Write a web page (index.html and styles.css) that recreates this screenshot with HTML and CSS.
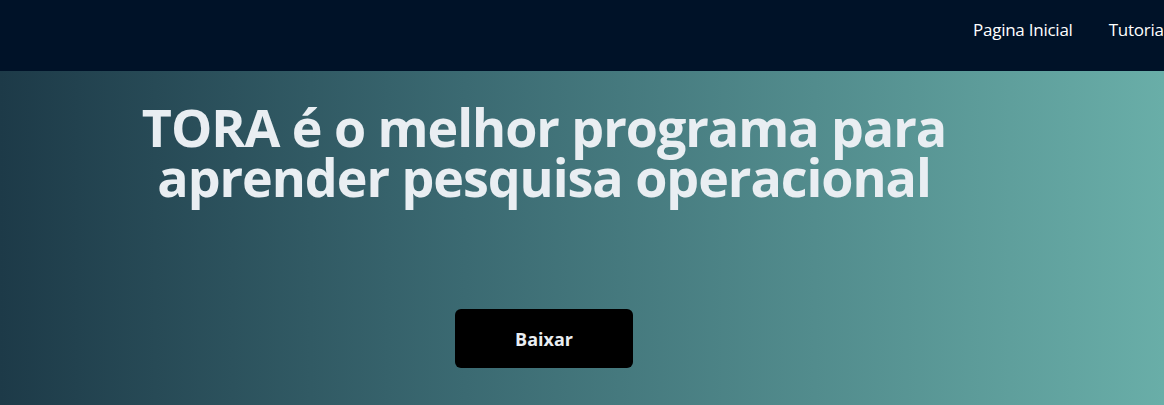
FILE: index.html
```html
<!DOCTYPE html>
<html lang="pt">
<head>
<meta charset="utf-8">
<link rel="stylesheet" href="styles.css">
</head>
<body>
<header class="topbar">
  <nav class="nav">
    <a class="nav-link" href="#">Pagina Inicial</a>
    <a class="nav-link" href="#">Tutoriais</a>
  </nav>
</header>
<main class="hero">
  <h1 class="hero-title">TORA é o melhor programa para aprender pesquisa operacional</h1>
  <a class="btn" href="#">Baixar</a>
</main>
</body>
</html>
```
FILE: styles.css
```css
* { box-sizing: border-box; }
html, body { margin: 0; padding: 0; overflow: hidden; }
body {
  width: 1164px;
  height: 405px;
  font-family: "Open Sans", "Noto Sans", sans-serif;
  background: linear-gradient(90deg, #1d3a48 0%, #3b6a72 40%, #69aea8 100%);
}
.topbar {
  height: 71px;
  background: #001228;
  display: flex;
  align-items: flex-start;
  padding-top: 18px;
  padding-left: 973px;
  white-space: nowrap;
  overflow: hidden;
}
.nav { display: flex; gap: 36px; }
.nav-link {
  color: #ffffff;
  text-decoration: none;
  font-size: 17px;
  letter-spacing: -0.25px;
}
.hero {
  display: flex;
  flex-direction: column;
  align-items: center;
  padding-right: 76px;
  padding-top: 31px;
}
.hero-title {
  margin: 0;
  width: 860px;
  text-align: center;
  color: #e9eef2;
  font-size: 52px;
  line-height: 50px;
  font-weight: 700;
  letter-spacing: -1.05px;
}
.btn {
  margin-top: 107px;
  width: 178px;
  height: 59px;
  background: #000;
  border-radius: 6px;
  color: #e9eef2;
  font-weight: 700;
  font-size: 18px;
  text-decoration: none;
  display: flex;
  align-items: center;
  justify-content: center;
}
```
